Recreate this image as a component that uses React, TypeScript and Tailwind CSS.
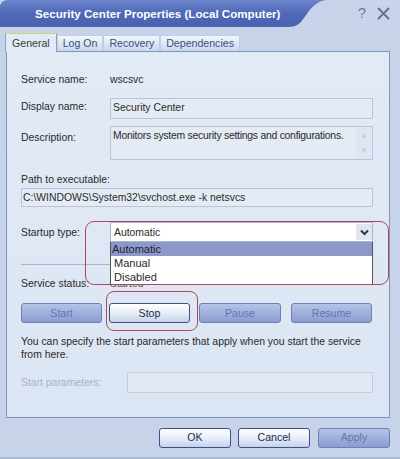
const font = { fontFamily: '"Liberation Sans", Arial, sans-serif' };

function Tab({ label, active }: { label: string; active?: boolean }) {
  if (active) {
    return (
      <div className="relative z-10 -mb-px flex h-[19px] items-center border border-b-0 border-[#8da0c6] border-t-[#c8d870] bg-[#e2eaf6] px-[6px] pt-px text-[10.6px] text-[#3a3a3a]">
        {label}
      </div>
    );
  }
  return (
    <div className="mt-[2px] flex h-[16px] items-center border border-b-0 border-[#c2cde3] bg-gradient-to-b from-[#f4f7fc] to-[#c9d6ec] px-[5px] text-[10.6px] text-[#3a4f80]">
      {label}
    </div>
  );
}

function WinButton({ label, enabled, className = '' }: { label: string; enabled?: boolean; className?: string }) {
  if (enabled) {
    return (
      <div
        className={`flex h-[20px] items-center justify-center rounded-[3px] border border-[#3f5186] bg-gradient-to-b from-[#ffffff] via-[#e8eef8] to-[#c4d2ea] text-[10.6px] text-[#1c2a50] ${className}`}
      >
        {label}
      </div>
    );
  }
  return (
    <div
      className={`flex h-[20px] items-center justify-center rounded-[3px] border border-[#6d7fb4] bg-gradient-to-b from-[#b5c3e6] to-[#8a9dd2] text-[10.6px] text-[#6476ac] ${className}`}
    >
      {label}
    </div>
  );
}

export default function App() {
  return (
    <div className="h-[459px] w-[400px] overflow-hidden bg-[#c7d3e8]" style={font}>
      {/* Title bar */}
      <div className="relative h-[27px]">
        <svg className="absolute inset-0" width="400" height="27" viewBox="0 0 400 27">
          <defs>
            <linearGradient id="tb" x1="0" y1="0" x2="0" y2="1">
              <stop offset="0" stopColor="#6c84cc" />
              <stop offset="0.5" stopColor="#4f68b8" />
              <stop offset="1" stopColor="#4a62b0" />
            </linearGradient>
          </defs>
          <rect width="400" height="27" fill="#c9d4ea" />
          <path d="M8 0 H326 C314 2 310 10 304 18 C300 24 296 27 288 27 H0 V8 Q0 0 8 0 Z" fill="url(#tb)" />
        </svg>
        <div className="relative flex h-full items-center pl-[35px] pr-[10px]">
          <span className="text-[11.6px] font-bold text-white">Security Center Properties (Local Computer)</span>
          <span className="ml-auto text-[15px] text-[#6a7aa0]">?</span>
          <svg className="ml-[11px]" width="13" height="13" viewBox="0 0 13 13">
            <path d="M1.5 1.5 L11.5 11.5 M11.5 1.5 L1.5 11.5" stroke="#5f6f98" strokeWidth="1.8" strokeLinecap="round" />
          </svg>
        </div>
      </div>

      {/* Tabs */}
      <div className="mt-[6px] flex items-end pl-[5px]">
        <Tab label="General" active />
        <Tab label="Log On" />
        <Tab label="Recovery" />
        <Tab label="Dependencies" />
      </div>

      {/* Panel */}
      <div className="mx-[6px] h-[367px] w-[384px] border border-[#8194bd] bg-gradient-to-b from-[#e2eaf6] to-[#dce5f3] px-[14px] text-[10.4px] leading-[13px] text-[#2a2a2a]">
        <div className="mt-[21px] flex items-center">
          <span className="w-[89px]">Service name:</span>
          <span>wscsvc</span>
        </div>

        <div className="mt-[12px] flex items-start">
          <span className="mt-[2px] w-[89px]">Display name:</span>
          <div className="h-[21px] w-[263px] border border-[#b8c4d8] bg-[#e4ebf5] px-[2px] pt-[2px]">Security Center</div>
        </div>

        <div className="mt-[7px] flex items-start">
          <span className="mt-[5px] w-[89px]">Description:</span>
          <div className="flex h-[34px] w-[263px] border border-[#b8c4d8] bg-[#e4ebf5]">
            <div className="flex-1 overflow-hidden whitespace-nowrap px-[2px] pt-[2px] tracking-[-0.25px]">
              Monitors system security settings and configurations.
            </div>
            <div className="flex w-[16px] flex-col items-center justify-between bg-[#dde6f2] py-[2px] text-[8px] text-[#c0cce0]">
              <span>▲</span>
              <span>▼</span>
            </div>
          </div>
        </div>

        <div className="mt-[13px]">Path to executable:</div>
        <div className="mt-[2px] h-[19px] w-[352px] border border-[#b8c4d8] bg-[#e4ebf5] px-[1px] pt-[2px]">
          C:\WINDOWS\System32\svchost.exe -k netsvcs
        </div>

        {/* Startup type + dropdown */}
        <div className="relative mt-[15px] flex items-start">
          <span className="mt-[4px] w-[89px]">Startup type:</span>
          <div className="w-[263px]">
            <div className="flex h-[20px] items-center border border-[#a8b6d0] bg-white pl-[3px]">
              <span className="flex-1">Automatic</span>
              <div className="flex h-[16px] w-[16px] items-center justify-center bg-[#dfe6f2]">
                <svg width="9" height="7" viewBox="0 0 9 7">
                  <path d="M1 1.5 L4.5 5 L8 1.5" stroke="#2e3550" strokeWidth="2" fill="none" />
                </svg>
              </div>
            </div>
            <div className="relative z-10 border border-[#555] border-t-0 bg-white text-[11px] leading-[14px]">
              <div className="bg-[#8c99c8] pl-[1px] text-[#1d2140]">Automatic</div>
              <div className="pl-[3px]">Manual</div>
              <div className="pl-[3px]">Disabled</div>
            </div>
          </div>
          {/* highlight ring */}
          <div className="pointer-events-none absolute left-[64px] top-[-1px] z-20 h-[64px] w-[304px] rounded-[9px] border-[1.5px] border-[#b0465c]" />
          {/* separator + status behind dropdown */}
          <div className="absolute left-0 top-[42px] h-px w-[300px] bg-[#a8b4ca]" />
          <div className="absolute left-0 top-[55px] flex">
            <span className="w-[89px]">Service status:</span>
            <span className="text-[#555]">Started</span>
          </div>
        </div>

        {/* Buttons */}
        <div className="relative mt-[18px] flex">
          <WinButton label="Start" className="w-[81px]" />
          <WinButton label="Stop" enabled className="ml-[7px] w-[81px]" />
          <WinButton label="Pause" className="ml-[9px] w-[82px]" />
          <WinButton label="Resume" className="ml-[10px] w-[81px]" />
          <div className="pointer-events-none absolute left-[85px] top-[-12px] h-[40px] w-[92px] rounded-[8px] border-[1.5px] border-[#b0465c]" />
        </div>

        <p className="mt-[12px] w-[355px]">
          You can specify the start parameters that apply when you start the service from here.
        </p>

        <div className="mt-[11px] flex items-center">
          <span className="w-[106px] text-[#a8b2c4]">Start parameters:</span>
          <div className="h-[21px] w-[246px] border border-[#c4cee0] bg-[#e2e9f4]" />
        </div>
      </div>

      {/* Bottom buttons */}
      <div className="mt-[10px] flex justify-end pr-[10px]">
        <WinButton label="OK" enabled className="w-[72px]" />
        <WinButton label="Cancel" enabled className="ml-[7px] w-[72px]" />
        <WinButton label="Apply" className="ml-[8px] w-[72px]" />
      </div>
      <div className="mt-[9px] h-[2px] bg-[#aebbd4]" />
    </div>
  );
}
